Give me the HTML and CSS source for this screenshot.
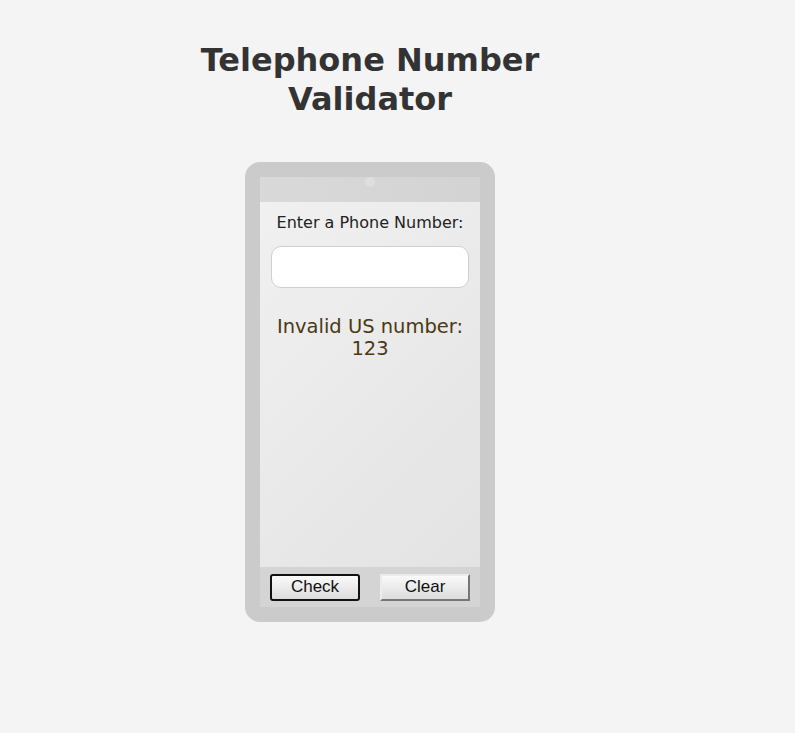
FILE: index.html
```html
<!DOCTYPE html>
<html>
<head>
<meta charset="utf-8">
<link rel="stylesheet" href="styles.css">
</head>
<body>
<div class="page">
  <h1 class="title">Telephone Number<br>Validator</h1>
  <div class="phone">
    <div class="screen">
      <div class="topbar"><span class="camera"></span></div>
      <div class="content">
        <label class="label" for="user-input">Enter a Phone Number:</label>
        <input class="field" id="user-input" type="text">
        <div class="result">Invalid US number:<br>123</div>
      </div>
      <div class="bottombar">
        <button class="btn btn-focus">Check</button>
        <button class="btn">Clear</button>
      </div>
    </div>
  </div>
</div>
</body>
</html>
```
FILE: styles.css
```css
html, body {
  margin: 0;
  padding: 0;
  background: #f4f4f4;
}
body {
  font-family: "DejaVu Sans", Verdana, sans-serif;
}
.page {
  width: 740px;
  display: flex;
  flex-direction: column;
  align-items: center;
}
.title {
  margin: 41px 0 0;
  font-size: 32px;
  line-height: 39px;
  font-weight: bold;
  color: #333;
  text-align: center;
}
.phone {
  margin-top: 43px;
  width: 220px;
  height: 430px;
  padding: 15px;
  background: #cbcbcb;
  border-radius: 15px;
}
.screen {
  height: 100%;
  display: flex;
  flex-direction: column;
  background: linear-gradient(135deg, #f1f1f1 0%, #e2e2e2 100%);
}
.topbar {
  height: 25px;
  background: linear-gradient(90deg, #d9d9d9, #d3d3d3);
  display: flex;
  justify-content: center;
}
.camera {
  width: 10px;
  height: 10px;
  border-radius: 50%;
  background: #dedede;
}
.content {
  flex: 1;
  display: flex;
  flex-direction: column;
  align-items: center;
  padding-top: 11px;
}
.label {
  font-size: 16px;
  color: #222;
  line-height: 20px;
}
.field {
  margin-top: 13px;
  width: 198px;
  height: 42px;
  box-sizing: border-box;
  border: 1px solid #cfcfcf;
  border-radius: 10px;
  background: #fff;
}
.result {
  margin-top: 28px;
  font-size: 19.5px;
  line-height: 22px;
  color: #4a3913;
  text-align: center;
}
.bottombar {
  height: 40px;
  background: #d4d4d4;
  display: flex;
  justify-content: space-between;
  align-items: center;
  padding: 0 10px;
}
.btn {
  width: 90px;
  height: 27px;
  box-sizing: border-box;
  font-family: "Liberation Sans", Arial, sans-serif;
  font-size: 17px;
  color: #111;
  background: linear-gradient(#fafafa, #dcdcdc);
  border: 2px solid;
  border-color: #ececec #767676 #767676 #ececec;
  padding: 0;
}
.btn-focus {
  border: 2px solid #111;
  border-radius: 3px;
}
```
